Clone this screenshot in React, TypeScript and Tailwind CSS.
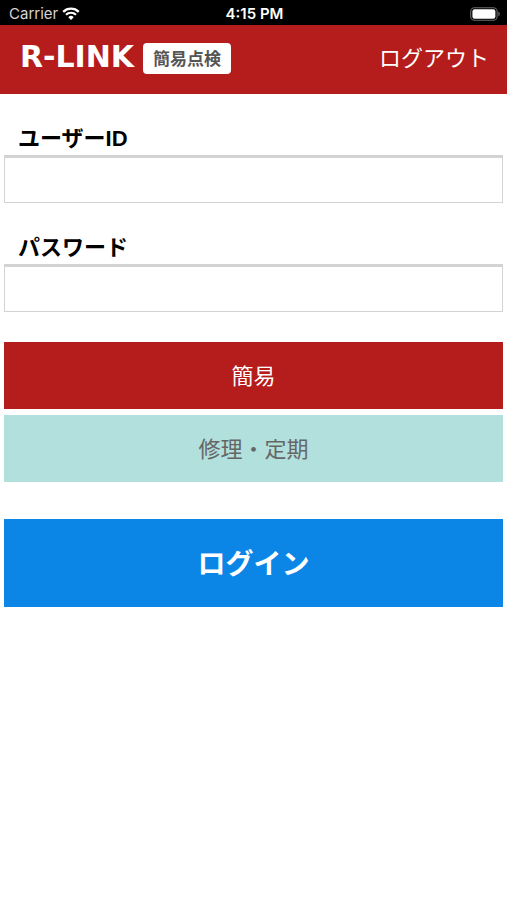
import { useState } from "react";

function WifiIcon() {
  return (
    <svg viewBox="0 0 18 13" className="h-[13px] w-[18px]" fill="none" aria-hidden="true">
      <path d="M1.2 4.8a11.2 11.2 0 0 1 15.6 0" stroke="white" strokeWidth="2.3" />
      <path d="M4 7.8a7.1 7.1 0 0 1 10 0" stroke="white" strokeWidth="2.2" />
      <path d="M9 12.9 6.3 10.2a3.8 3.8 0 0 1 5.4 0Z" fill="white" />
    </svg>
  );
}

function BatteryIcon() {
  return (
    <svg viewBox="0 0 30 14" className="h-[14px] w-[30px]" fill="none" aria-hidden="true">
      <rect x="0.7" y="0.7" width="26.4" height="12.6" rx="3.8" stroke="#6b6b6b" strokeWidth="1.1" />
      <rect x="2.4" y="2.3" width="23" height="9.4" rx="2.2" fill="white" />
      <path d="M28.3 4.8c1 .3 1.5 1.2 1.5 2.2s-.5 1.9-1.5 2.2Z" fill="#6b6b6b" />
    </svg>
  );
}

function StatusBar() {
  return (
    <div className="grid h-[25px] grid-cols-3 items-center bg-black pt-[2px] pr-[7px] pl-[9px] font-['Inter','Liberation_Sans',sans-serif] text-[15px] leading-4 text-white">
      <div className="flex items-center gap-1 text-[#d4d4d4]">
        <span>Carrier</span>
        <WifiIcon />
      </div>
      <span className="text-center font-semibold">4:15 PM</span>
      <div className="flex justify-end">
        <BatteryIcon />
      </div>
    </div>
  );
}

function Header() {
  return (
    <header className="flex h-[69px] items-center justify-between bg-[#b51c1c] pr-[18px] pb-[5px] pl-[15px] text-white">
      <div className="flex items-center gap-1">
        <span className="w-[124px] text-center font-['DejaVu_Sans',sans-serif] text-[30px] leading-8 font-bold">
          R-LINK
        </span>
        <span className="mt-[2px] rounded-[4px] bg-white px-[10px] pb-px text-[17px] leading-[30px] font-bold text-[#555]">
          簡易点検
        </span>
      </div>
      <a href="#logout" className="pb-[2px] text-[22px] leading-8">
        ログアウト
      </a>
    </header>
  );
}

function Field({ id, label, type }: { id: string; label: string; type: string }) {
  return (
    <div className="flex flex-col">
      <label
        htmlFor={id}
        className="pl-[14px] font-['Liberation_Sans','Noto_Sans_CJK_JP',sans-serif] text-[22px] leading-8 font-bold text-black"
      >
        {label}
      </label>
      <input
        id={id}
        type={type}
        className="h-12 w-full border border-t-[3px] border-[#d3d3d3] bg-white px-3 text-[22px] outline-none"
      />
    </div>
  );
}

export default function App() {
  const [mode, setMode] = useState("simple");
  return (
    <div className="min-h-screen bg-white font-['Noto_Sans_CJK_JP',sans-serif]">
      <StatusBar />
      <Header />
      <form className="flex flex-col px-1 pt-[29px]" onSubmit={(e) => e.preventDefault()}>
        <div className="flex flex-col gap-[29px]">
          <Field id="user-id" label="ユーザーID" type="text" />
          <Field id="password" label="パスワード" type="password" />
        </div>
        <div className="mt-[30px] flex flex-col gap-[6px] text-[22px]">
          <button
            type="button"
            aria-pressed={mode === "simple"}
            onClick={() => setMode("simple")}
            className="h-[67px] bg-[#b51c1c] pb-[2px] text-white"
          >
            簡易
          </button>
          <button
            type="button"
            aria-pressed={mode === "repair"}
            onClick={() => setMode("repair")}
            className="h-[67px] bg-[#b2e0dc] pb-[2px] text-[#666]"
          >
            修理・定期
          </button>
        </div>
        <button type="submit" className="mt-[37px] h-[88px] bg-[#0c86e6] pb-[2px] text-[28px] font-bold text-white">
          ログイン
        </button>
      </form>
    </div>
  );
}
